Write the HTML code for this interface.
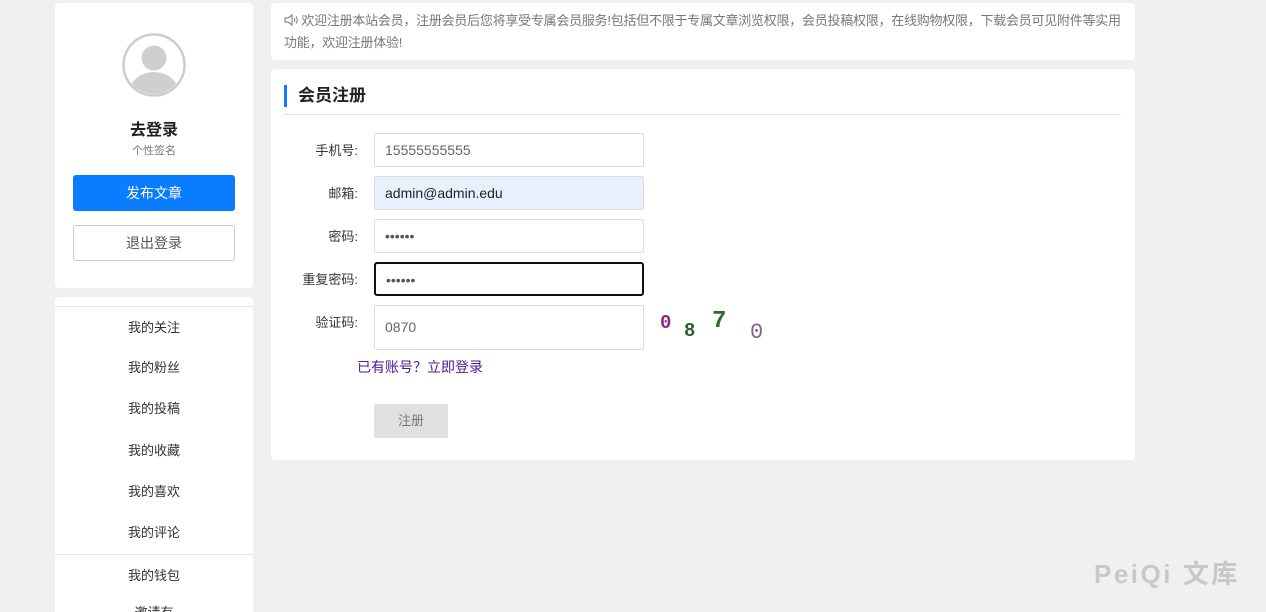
<!DOCTYPE html>
<html><head><meta charset="utf-8"><style>
*{box-sizing:border-box;margin:0;padding:0}
html,body{width:1266px;height:612px;overflow:hidden}
body{background:#f0f0f0;font-family:"Liberation Sans","Noto Sans CJK SC",sans-serif;font-size:13px;color:#333;position:relative}
.card{position:absolute;background:#fff;border-radius:4px}
.abs{position:absolute}
.lbl{position:absolute;width:60px;text-align:right;font-size:13px;color:#333;left:298px}
.inp{position:absolute;left:374px;width:270px;height:34px;border:1px solid #ddd;border-radius:2px;padding-left:10px;line-height:32px;font-size:14px;color:#666;background:#fff}
.menu{position:absolute;left:55px;width:198px;text-align:center;font-size:13px;color:#333}
</style></head><body>
<div class="card" style="left:55px;top:3px;width:198px;height:285px">
  <svg class="abs" style="left:67px;top:30px" width="64" height="64" viewBox="0 0 64 64"><circle cx="32" cy="32" r="30.5" fill="#fff" stroke="#ccc" stroke-width="2.5"/><clipPath id="c"><circle cx="32" cy="32" r="29"/></clipPath><g clip-path="url(#c)" fill="#cfcfcf"><circle cx="32" cy="25" r="12.5"/><ellipse cx="32" cy="58" rx="24" ry="19"/></g></svg>
  <div class="abs" style="left:0;width:198px;top:113px;text-align:center;font-size:16px;font-weight:bold;color:#222">去登录</div>
  <div class="abs" style="left:0;width:198px;top:139px;text-align:center;font-size:11px;color:#777">个性签名</div>
  <div class="abs" style="left:18px;top:172px;width:162px;height:36px;background:#0a7cff;border-radius:3px;color:#fff;text-align:center;line-height:36px;font-size:14px">发布文章</div>
  <div class="abs" style="left:18px;top:222px;width:162px;height:36px;border:1px solid #ccc;border-radius:3px;color:#555;text-align:center;line-height:34px;font-size:14px">退出登录</div>
</div>
<div class="card" style="left:55px;top:297px;width:198px;height:330px"></div>
<div class="abs" style="left:55px;top:306px;width:198px;border-top:1px solid #e5e5e5"></div>
<div class="menu" style="top:317px">我的关注</div>
<div class="menu" style="top:357px">我的粉丝</div>
<div class="menu" style="top:398px">我的投稿</div>
<div class="menu" style="top:440px">我的收藏</div>
<div class="menu" style="top:481px">我的喜欢</div>
<div class="menu" style="top:522px">我的评论</div>
<div class="abs" style="left:55px;top:554px;width:198px;border-top:1px solid #e5e5e5"></div>
<div class="menu" style="top:565px">我的钱包</div>
<div class="menu" style="top:602px">邀请有</div>

<div class="card" style="left:271px;top:3px;width:864px;height:57px"></div>
<div class="abs" style="left:284px;top:10px;font-size:13px;line-height:22px;color:#777;white-space:nowrap;letter-spacing:-0.25px"><svg width="14" height="12" viewBox="0 0 14 12" style="vertical-align:-1px"><path d="M1 4h3l4-3v10l-4-3H1z" fill="none" stroke="#888" stroke-width="1.2"/><path d="M10 4q1.5 2 0 4M12 2.5q2.5 3.5 0 7" fill="none" stroke="#888" stroke-width="1.1"/></svg> 欢迎注册本站会员，注册会员后您将享受专属会员服务!包括但不限于专属文章浏览权限，会员投稿权限，在线购物权限，下载会员可见附件等实用<br>功能，欢迎注册体验!</div>

<div class="card" style="left:271px;top:69px;width:864px;height:391px"></div>
<div class="abs" style="left:284px;top:85px;width:3px;height:22px;background:#0a7cff"></div>
<div class="abs" style="left:298px;top:85px;font-size:17px;font-weight:bold;color:#222;line-height:22px">会员注册</div>
<div class="abs" style="left:284px;top:114px;width:837px;border-top:1px solid #e2e2e2"></div>

<div class="lbl" style="top:140px">手机号:</div>
<div class="inp" style="top:133px">15555555555</div>
<div class="lbl" style="top:183px">邮箱:</div>
<div class="inp" style="top:176px;background:#e8f0fe;color:#222">admin@admin.edu</div>
<div class="lbl" style="top:226px">密码:</div>
<div class="inp" style="top:219px;color:#555">••••••</div>
<div class="lbl" style="top:269px">重复密码:</div>
<div class="inp" style="top:262px;border:2px solid #111;border-radius:3px;color:#555">••••••</div>
<div class="lbl" style="top:312px">验证码:</div>
<div class="inp" style="top:305px;height:45px;line-height:43px">0870</div>
<div class="abs" style="left:660px;top:312px;font-family:'Liberation Mono',monospace;font-weight:bold;font-size:19px;color:#8b2a7e">0</div>
<div class="abs" style="left:684px;top:320px;font-family:'Liberation Mono',monospace;font-weight:bold;font-size:19px;color:#2a5f2a">8</div>
<div class="abs" style="left:712px;top:308px;font-family:'Liberation Mono',monospace;font-weight:bold;font-size:24px;color:#2a6b2a">7</div>
<div class="abs" style="left:750px;top:320px;font-family:'Liberation Mono',monospace;font-size:22px;color:#8e5c90">0</div>
<div class="abs" style="left:357px;top:357px;font-size:14px;color:#4b1a9a">已有账号？立即登录</div>
<div class="abs" style="left:374px;top:404px;width:74px;height:34px;background:#e0e0e0;border-radius:2px;color:#777;text-align:center;line-height:34px;font-size:13px">注册</div>

<div class="abs" style="left:1094px;top:554px;font-size:26px;font-weight:bold;color:#c8c8c8;letter-spacing:2.5px;white-space:nowrap">PeiQi 文库</div>
</body></html>
